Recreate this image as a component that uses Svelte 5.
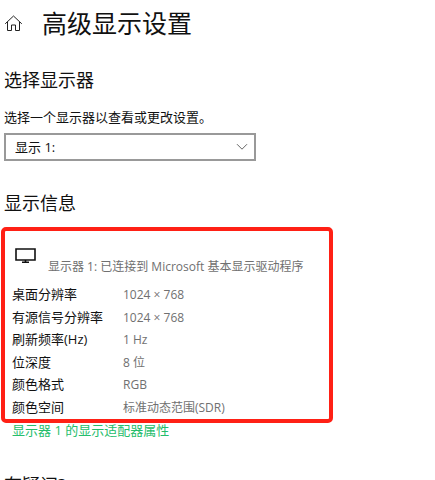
<script lang="ts">
  let selected = $state('1')

  const details = [
    { label: '桌面分辨率', value: '1024 × 768' },
    { label: '有源信号分辨率', value: '1024 × 768' },
    { label: '刷新频率(Hz)', value: '1 Hz' },
    { label: '位深度', value: '8 位' },
    { label: '颜色格式', value: 'RGB' },
    { label: '颜色空间', value: '标准动态范围(SDR)' },
  ]
</script>

<main>
  <header class="page-header">
    <button type="button" class="home" aria-label="主页">
      <svg width="18" height="18" viewBox="0 0 18 18" aria-hidden="true">
        <path d="M1.2 9.8 9.5 2l8.3 7.8M3.5 8v8.5h4V11h4v5.5h4V8" />
      </svg>
    </button>
    <h1>高级显示设置</h1>
  </header>

  <section>
    <h2>选择显示器</h2>
    <label class="hint" for="display">选择一个显示器以查看或更改设置。</label>
    <div class="select">
      <select id="display" bind:value={selected}>
        <option value="1">显示 1:</option>
      </select>
      <svg class="chevron" width="12" height="8" viewBox="0 0 12 8" aria-hidden="true">
        <path d="M1 1.2l5 5 5-5" />
      </svg>
    </div>
  </section>

  <section class="info">
    <h2>显示信息</h2>
    <div class="panel">
      <div class="device">
        <svg width="22" height="16" viewBox="0 0 22 16" aria-hidden="true">
          <path d="M1 1h19v11H1zM10.5 12v2.3M7 14.3h7" />
        </svg>
        <span>显示器 1: 已连接到 Microsoft 基本显示驱动程序</span>
      </div>
      <table>
        <tbody>
          {#each details as row}
            <tr>
              <th scope="row">{row.label}</th>
              <td>{row.value}</td>
            </tr>
          {/each}
        </tbody>
      </table>
    </div>
    <a href="#adapter">显示器 1 的显示适配器属性</a>
  </section>

  <section class="help">
    <h2>有疑问?</h2>
  </section>
</main>

<style>
  :global(body) {
    margin: 0;
    background: #fff;
  }

  main {
    padding: 0 4px;
    font-family: 'Open Sans', 'Noto Sans CJK SC', sans-serif;
    font-size: 13px;
    color: #111;
  }

  svg {
    display: block;
    fill: none;
    stroke: #222;
  }

  .page-header {
    display: flex;
    align-items: center;
    gap: 20px;
    height: 46px;
    margin-bottom: 22px;
  }

  .home {
    padding: 0;
    border: 0;
    background: none;
  }

  h1 {
    margin: 0;
    font-size: 25px;
    font-weight: 400;
    line-height: 32px;
  }

  h2 {
    margin: 0;
    font-size: 18px;
    font-weight: 400;
    line-height: 24px;
  }

  .hint {
    display: block;
    margin: 15px 0 6px;
    line-height: 20px;
  }

  .select {
    position: relative;
    max-width: 252px;
  }

  select {
    display: block;
    width: 100%;
    height: 28px;
    padding: 0 28px 0 9px;
    border: 2px solid #999;
    border-radius: 0;
    background: #fff;
    color: inherit;
    font: inherit;
    appearance: none;
  }

  .chevron {
    position: absolute;
    top: 10px;
    right: 8px;
    stroke: #666;
    pointer-events: none;
  }

  .info {
    margin-top: 30px;
  }

  .panel {
    box-sizing: border-box;
    max-width: 332px;
    margin: 12px 0 0 -3px;
    padding: 17px 7px 1px;
    border: 4px solid #ff2015;
    border-radius: 5px;
  }

  .device {
    display: flex;
    gap: 11px;
    margin: 0 0 6px 3px;
    color: #707070;
    font-size: 12px;
  }

  .device svg {
    flex: none;
    stroke: #111;
    stroke-width: 1.6;
  }

  .device span {
    padding-top: 9px;
    line-height: 20px;
  }

  table {
    width: 100%;
    height: 135px;
    border-collapse: collapse;
    line-height: 20px;
  }

  th,
  td {
    padding: 0;
    text-align: left;
    font-weight: 400;
  }

  th {
    width: 111px;
  }

  td {
    padding-top: 2px;
    color: #707070;
    font-size: 12px;
  }

  a {
    display: block;
    margin-left: 8px;
    color: #25bd6b;
    line-height: 14px;
    text-decoration: none;
  }

  .help {
    margin-top: 36px;
  }
</style>
